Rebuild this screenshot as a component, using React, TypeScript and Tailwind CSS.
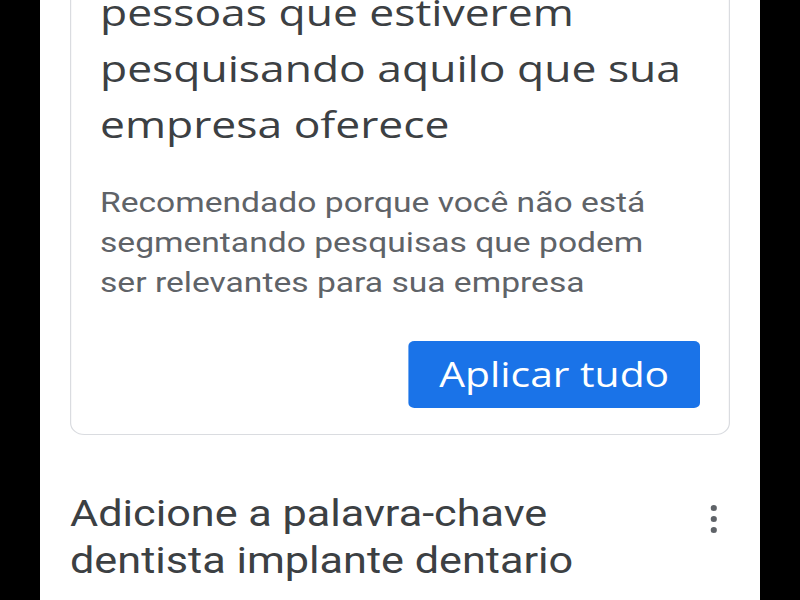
export default function App() {
  return (
    <div className="h-[600px] w-[800px] overflow-hidden bg-black">
      <div className="mx-auto flex h-full w-[720px] flex-col overflow-hidden bg-white">
        {/* the capture is stretched horizontally, so lay out at 600px and widen */}
        <div className="w-[600px] origin-left scale-x-[1.2] px-[25px]">
          {/* Recommendation card */}
          <div className="-mt-[40px] rounded-[12px] border border-[#dadce0] px-[24px] pb-[26px] pt-[23px]">
            <h2
              className="text-[37px] leading-[56px] text-[#3c4043]"
              style={{ fontFamily: '"Open Sans", sans-serif' }}
            >
              pessoas que estiverem pesquisando aquilo que sua empresa oferece
            </h2>
            <p
              className="mr-[16px] mt-[31px] text-[28px] leading-[40px] text-[#5f6368]"
              style={{ fontFamily: 'Roboto, sans-serif' }}
            >
              Recomendado porque você não está segmentando pesquisas que podem ser relevantes para sua empresa
            </p>
            <div className="mt-[38px] flex justify-end">
              <button
                className="flex h-[67px] w-[243px] items-center justify-center rounded-[5px] bg-[#1a73e8] text-[34px] text-white"
                style={{ fontFamily: '"Open Sans", sans-serif' }}
              >
                Aplicar tudo
              </button>
            </div>
          </div>

          {/* Next recommendation */}
          <div className="mt-[56px] flex items-start justify-between">
            <h3
              className="text-[36px] leading-[47px] text-[#3c4043]"
              style={{ fontFamily: 'Roboto, sans-serif' }}
            >
              Adicione a palavra-chave
              <br />
              dentista implante dentario
            </h3>
            <div className="mr-[11px] mt-[14px] flex flex-col items-center gap-[5px]">
              <span className="h-[6px] w-[5px] rounded-full bg-[#5f6368]" />
              <span className="h-[6px] w-[5px] rounded-full bg-[#5f6368]" />
              <span className="h-[6px] w-[5px] rounded-full bg-[#5f6368]" />
            </div>
          </div>
        </div>
      </div>
    </div>
  );
}
